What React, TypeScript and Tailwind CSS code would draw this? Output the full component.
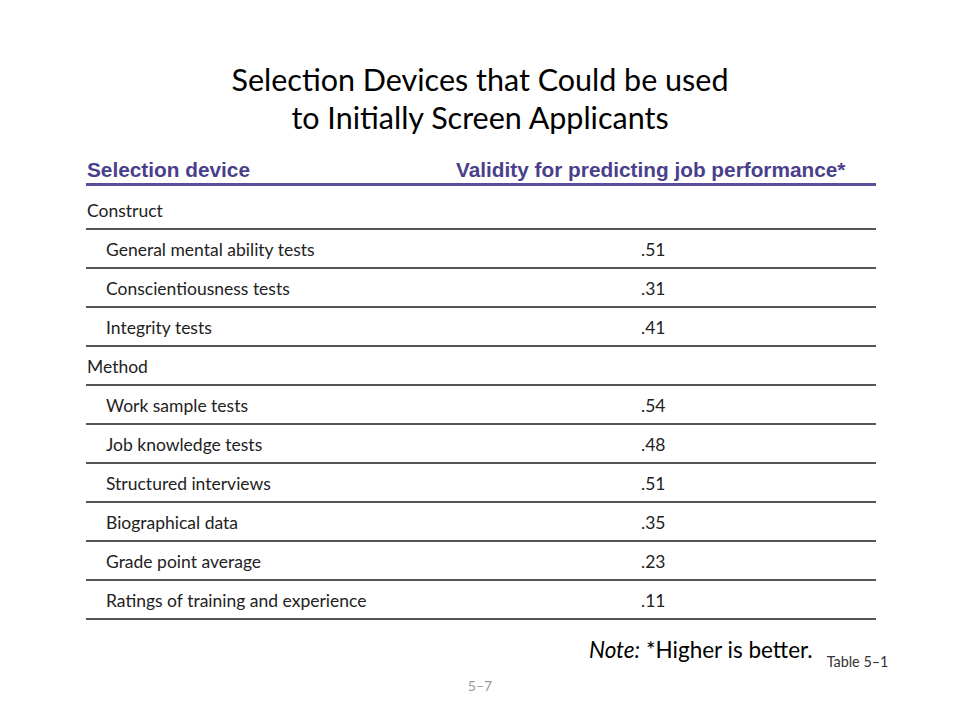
import React from "react";

const rows: { label: string; value?: string; cat?: boolean }[] = [
  { label: "General mental ability tests", value: ".51" },
  { label: "Conscientiousness tests", value: ".31" },
  { label: "Integrity tests", value: ".41" },
  { label: "Method", cat: true },
  { label: "Work sample tests", value: ".54" },
  { label: "Job knowledge tests", value: ".48" },
  { label: "Structured interviews", value: ".51" },
  { label: "Biographical data", value: ".35" },
  { label: "Grade point average", value: ".23" },
  { label: "Ratings of training and experience", value: ".11" },
];

export default function App() {
  return (
    <div className="w-[960px] h-[720px] bg-white flex flex-col relative" style={{ fontFamily: "Lato, 'Open Sans', sans-serif" }}>
      <div className="pt-[60px] text-center text-[30.5px] leading-[38px] text-black">
        <div>Selection Devices that Could be used</div>
        <div>to Initially Screen Applicants</div>
      </div>
      <div className="ml-[86px] w-[790px] mt-[20px]">
        <div
          className="flex items-end h-[30px] pb-[1px] border-b-[3px] border-[#5a4e9a] text-[#4a3f8b] font-bold text-[20.8px] leading-[24px]"
          style={{ fontFamily: "'Liberation Sans', Arial, sans-serif" }}
        >
          <div className="w-[370px] pl-[1px]">Selection device</div>
          <div>Validity for predicting job performance*</div>
        </div>
        <div className="h-[44px] flex items-end pb-[4px] border-b-2 border-[#555] text-[17.5px] text-[#222] pl-[1px]">
          Construct
        </div>
        {rows.map((r) => (
          <div key={r.label} className="h-[39px] pt-[3px] flex items-center border-b-2 border-[#555] text-[17.5px] text-[#222]">
            <div className={r.cat ? "w-[555px] pl-[1px]" : "w-[555px] pl-[20px]"}>{r.label}</div>
            <div>{r.value}</div>
          </div>
        ))}
      </div>
      <div className="flex items-end ml-[589px] mt-[17px]">
        <div className="text-[22.5px] text-black leading-[26px]">
          <i>Note:</i> *Higher is better.
        </div>
        <div className="ml-[14px] text-[14.4px] text-[#333] leading-[16px] -mb-[7px]">Table 5–1</div>
      </div>
      <div className="text-center text-[14px] text-[#999] mt-[12px]">5–7</div>
    </div>
  );
}
